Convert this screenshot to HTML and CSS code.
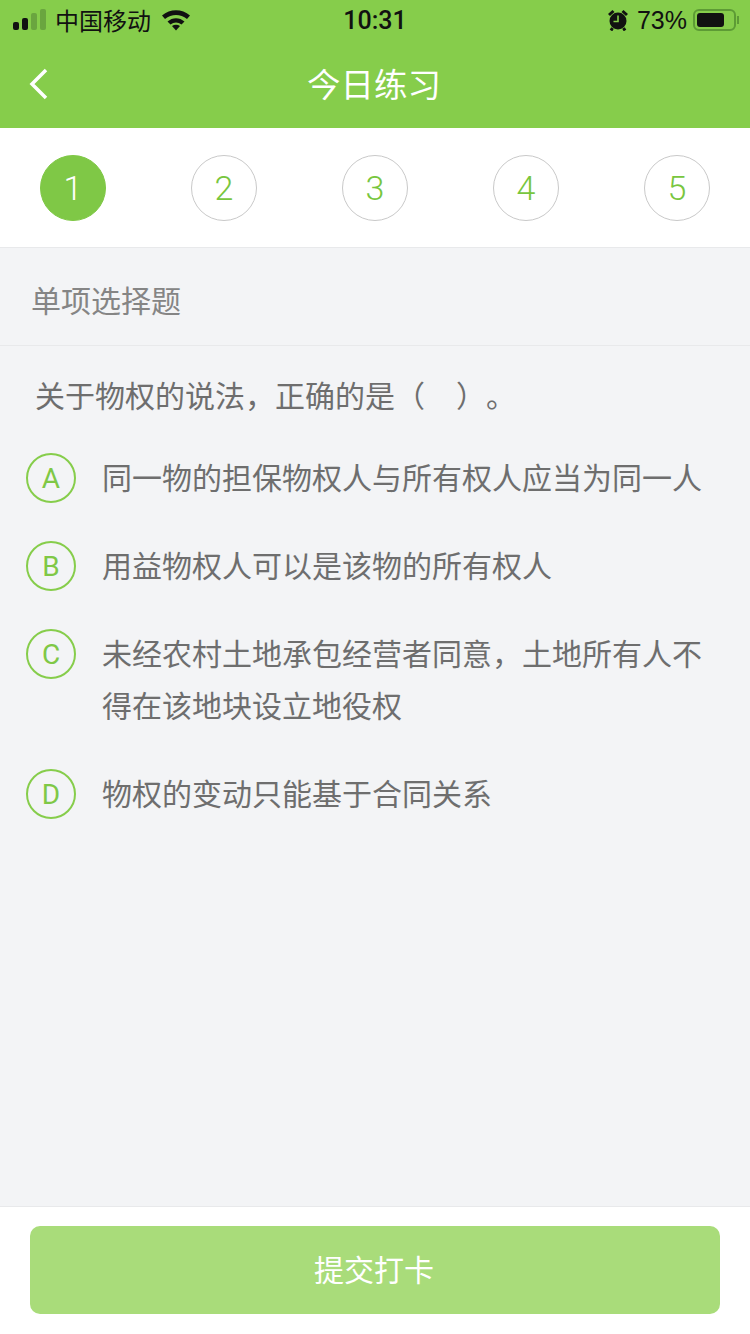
FILE: index.html
```html
<!DOCTYPE html>
<html lang="zh-CN">
<head>
    <meta charset="UTF-8">
    <title>今日练习</title>
    <link rel="stylesheet" href="styles.css">
</head>
<body>
    <div class="page">
        <header class="top">
            <div class="status-bar">
                <div class="status-left">
                    <svg class="signal" width="34" height="22" viewBox="0 0 34 22">
                        <rect x="0" y="13" width="6" height="8" rx="2" fill="#111"/>
                        <rect x="9" y="9" width="6" height="12" rx="2" fill="#111"/>
                        <rect x="18" y="4" width="6" height="17" rx="2" fill="#6aa53f"/>
                        <rect x="27" y="0" width="6" height="21" rx="2" fill="#6aa53f"/>
                    </svg>
                    <span class="carrier">中国移动</span>
                    <svg class="wifi" width="30" height="22" viewBox="0 0 30 22">
                        <path d="M1 6.500C9 -.5 21 -.5 29 6.500L26 10C19.500 4.500 10.500 4.500 4 10Z" fill="#111"/>
                        <path d="M6.500 12.500C11.500 8 18.500 8 23.500 12.500L20.500 15.500C17 12.800 13 12.800 9.500 15.500Z" fill="#111"/>
                        <path d="M11 17C13.500 15.200 16.500 15.200 19 17L15 21.500Z" fill="#111"/>
                    </svg>
                </div>
                <div class="status-time">10:31</div>
                <div class="status-right">
                    <svg class="alarm" width="20" height="22" viewBox="0 0 20 22">
                        <circle cx="10" cy="12" r="8.500" fill="#111"/>
                        <path d="M1 6L5.500 2M19 6L14.500 2M4.500 19L3 21.500M15.500 19L17 21.500" stroke="#111" stroke-width="3" fill="none"/>
                        <path d="M10 6.500V12.500H5.500" stroke="#86cd4b" stroke-width="1.600" fill="none"/>
                    </svg>
                    <span class="battery-text">73%</span>
                    <div class="battery">
                        <div class="battery-level"></div>
                    </div>
                    <div class="battery-cap"></div>
                </div>
            </div>
            <div class="nav-bar">
                <svg class="back" width="20" height="32" viewBox="0 0 20 32">
                    <path d="M17 2L3 16L17 30" stroke="#fff" stroke-width="3.500" fill="none"/>
                </svg>
                <h1 class="nav-title">今日练习</h1>
            </div>
        </header>

        <div class="steps">
            <div class="step step-active">1</div>
            <div class="step">2</div>
            <div class="step">3</div>
            <div class="step">4</div>
            <div class="step">5</div>
        </div>

        <main class="content">
            <div class="q-type">单项选择题</div>
            <div class="q-title">关于物权的说法，正确的是（&nbsp;&nbsp;&nbsp;&thinsp;）。</div>
            <div class="option">
                <div class="option-mark">A</div>
                <div class="option-text">同一物的担保物权人与所有权人应当为同一人</div>
            </div>
            <div class="option">
                <div class="option-mark">B</div>
                <div class="option-text">用益物权人可以是该物的所有权人</div>
            </div>
            <div class="option">
                <div class="option-mark">C</div>
                <div class="option-text">未经农村土地承包经营者同意，土地所有人不得在该地块设立地役权</div>
            </div>
            <div class="option">
                <div class="option-mark">D</div>
                <div class="option-text">物权的变动只能基于合同关系</div>
            </div>
        </main>

        <footer class="bottom">
            <div class="submit">提交打卡</div>
        </footer>
    </div>
</body>
</html>
```

FILE: styles.css
```css
*,::after,::before{
    padding: 0;
    margin: 0;
    box-sizing: border-box;
}

body{
    font-family: "Liberation Sans", "Noto Sans CJK SC", sans-serif;
    background: #f3f4f6;
}

.page{
    width: 750px;
    height: 1334px;
    display: flex;
    flex-direction: column;
    overflow: hidden;
}

.top{
    height: 128px;
    background: #86cd4b;
    flex-shrink: 0;
}

.status-bar{
    height: 40px;
    display: flex;
    justify-content: space-between;
    align-items: center;
    padding: 0 11px 0 13px;
    color: #111;
    position: relative;
}

.status-left,
.status-right{
    display: flex;
    align-items: center;
}

.carrier{
    font-size: 24px;
    margin-left: 8px;
    margin-bottom: 2px;
}

.wifi{
    margin-left: 10px;
}

.status-time{
    position: absolute;
    left: 0;
    right: 0;
    text-align: center;
    font-family: Roboto, sans-serif;
    font-weight: 500;
    font-size: 25px;
}

.alarm{
    margin-right: 9px;
}

.battery-text{
    font-size: 25px;
    margin-right: 6px;
}

.battery{
    width: 43px;
    height: 22px;
    border: 2px solid #5d9b35;
    border-radius: 6px;
    padding: 2px;
}

.battery-level{
    width: 76%;
    height: 100%;
    background: #111;
    border-radius: 3px;
}

.battery-cap{
    width: 2px;
    height: 8px;
    background: #5d9b35;
    margin-left: 1px;
}

.nav-bar{
    height: 88px;
    display: flex;
    align-items: center;
    justify-content: center;
    position: relative;
}

.back{
    position: absolute;
    left: 29px;
    top: 28px;
}

.nav-title{
    font-size: 33.500px;
    font-weight: normal;
    color: #fff;
    margin: 0 2px 4px 0;
}

.steps{
    height: 120px;
    background: #fff;
    border-bottom: 1px solid #e8e9eb;
    display: flex;
    justify-content: space-between;
    align-items: center;
    padding: 1px 40px 0;
    flex-shrink: 0;
}

.step{
    width: 66px;
    height: 66px;
    border-radius: 50%;
    border: 1px solid #c9c9c9;
    color: #78c63e;
    font-family: Roboto, sans-serif;
    font-weight: 300;
    font-size: 34px;
    display: flex;
    align-items: center;
    justify-content: center;
}

.step-active{
    background: #7fc846;
    border-color: #7fc846;
    color: #fff;
}

.content{
    flex: 1;
}

.q-type{
    height: 98px;
    border-bottom: 1px solid #e8e9eb;
    padding: 4px 0 0 31px;
    display: flex;
    align-items: center;
    font-size: 30px;
    color: #858585;
}

.q-title{
    font-size: 30px;
    color: #6e6e6e;
    line-height: 52px;
    padding: 25px 30px 0 35px;
    margin-bottom: 30px;
    text-spacing-trim: space-all;
}

.option{
    display: flex;
    padding: 0 30px 36px 26px;
}

.option-mark{
    width: 50px;
    height: 50px;
    border-radius: 50%;
    border: 2px solid #86cd4b;
    color: #7fc846;
    font-family: Roboto, sans-serif;
    font-size: 28px;
    display: flex;
    align-items: center;
    justify-content: center;
    flex-shrink: 0;
    margin-right: 26px;
}

.option-text{
    font-size: 30px;
    color: #6e6e6e;
    line-height: 52px;
}

.bottom{
    height: 128px;
    background: #fff;
    border-top: 1px solid #e8e9eb;
    padding: 19px 30px 0;
    flex-shrink: 0;
}

.submit{
    height: 88px;
    padding: 0 2px 5px 0;
    background: #a9dc7a;
    border-radius: 10px;
    color: #fff;
    font-size: 30px;
    display: flex;
    align-items: center;
    justify-content: center;
}
```
